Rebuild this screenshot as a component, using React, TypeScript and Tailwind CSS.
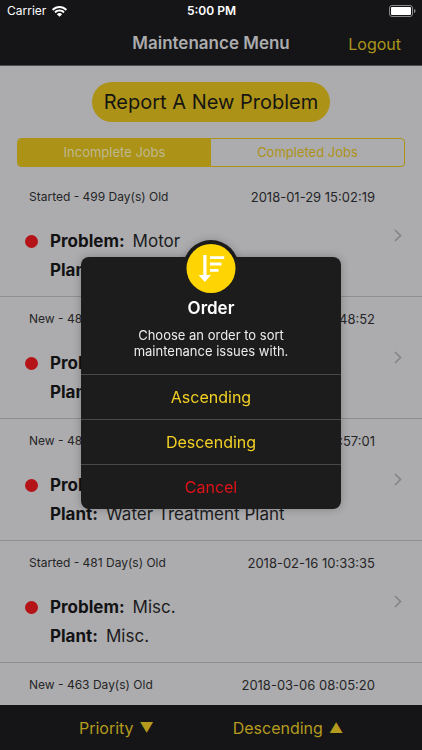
import React, { useState } from "react";

interface Job {
  id: number;
  status: string;
  age: number;
  date: string;
  problem: string;
  plant: string;
}

const jobs: Job[] = [
  { id: 1, status: "Started", age: 499, date: "2018-01-29 15:02:19", problem: "Motor", plant: "Misc." },
  { id: 2, status: "New", age: 488, date: "2018-02-09 13:48:52", problem: "Misc.", plant: "Misc." },
  { id: 3, status: "New", age: 484, date: "2018-02-13 10:57:01", problem: "Pump", plant: "Water Treatment Plant" },
  { id: 4, status: "Started", age: 481, date: "2018-02-16 10:33:35", problem: "Misc.", plant: "Misc." },
  { id: 5, status: "New", age: 463, date: "2018-03-06 08:05:20", problem: "Misc.", plant: "Misc." },
];

const WifiIcon: React.FC = () => (
  <svg viewBox="0 0 15 11" className="w-[15px] h-[11px]" fill="#fff" aria-hidden="true">
    <path d="M7.5 0C4.7 0 2.1 1.1.2 2.9c-.2.2-.2.4 0 .6l.9.9c.1.1.4.1.5 0C3.2 2.9 5.2 2 7.5 2s4.3.9 5.9 2.4c.1.1.4.1.5 0l.9-.9c.2-.2.2-.4 0-.6C12.9 1.1 10.3 0 7.5 0z" />
    <path d="M7.5 3.500c-1.900 0-3.600.7-4.900 1.900-.2.2-.2.4 0 .6l.9.9c.1.1.4.1.5 0 .9-.9 2.200-1.400 3.500-1.400s2.600.5 3.500 1.400c.1.1.4.1.5 0l.9-.9c.2-.2.2-.4 0-.6-1.300-1.200-3-1.900-4.900-1.900z" />
    <path d="M7.500 7c-.9 0-1.800.3-2.400.9-.2.2-.2.4 0 .6l2.100 2.100c.2.2.4.2.6 0l2.100-2.100c.2-.2.2-.4 0-.6C9.300 7.300 8.400 7 7.500 7z" />
  </svg>
);

const BatteryIcon: React.FC = () => (
  <svg viewBox="0 0 27 12" className="w-[27px] h-3" aria-hidden="true">
    <rect x="0.5" y="0.5" width="23" height="11" rx="2.5" fill="none" stroke="#8a8a8c" />
    <rect x="2" y="2" width="20" height="8" rx="1" fill="#fff" />
    <path d="M25 4c1 .3 1.500 1 1.500 2S26 7.700 25 8z" fill="#8a8a8c" />
  </svg>
);

const ChevronIcon: React.FC = () => (
  <svg viewBox="0 0 8 13" className="w-2 h-[13px]" fill="none" stroke="#858587" strokeWidth="1.7" aria-hidden="true">
    <path d="M1 1l5.500 5.500L1 12" />
  </svg>
);

const SortIcon: React.FC = () => (
  <svg viewBox="0 0 26 27" className="w-[26px] h-[27px]" fill="#fff" aria-hidden="true">
    <path d="M4.800 0H8v20h4.500l-6.200 7L0 20h4.800z" />
    <path d="M11.500 1.200H26V4H11.500zM11.500 7.600H23v2.800H11.500zM11.500 14H20v2.800h-8.500z" />
  </svg>
);

const JobRow: React.FC<{ job: Job }> = ({ job }) => (
  <li className="relative h-[122px] shrink-0 border-b border-[#8f8f91]">
    <a href={`#job-${job.id}`} className="flex h-full flex-col pl-[25px] pr-[47px] pt-3.5">
      <div className="flex justify-between pl-1 leading-4 text-[#252527]">
        <span className="text-xs leading-4">
          {job.status} - {job.age} Day(s) Old
        </span>
        <span className="text-[13px]">{job.date}</span>
      </div>
      <div className="mt-[22px] flex gap-3">
        <span className="mt-2 h-[13px] w-[13px] rounded-full bg-[#b41318]" />
        <div className="text-[17px] leading-[29px] text-[#1b1b1d]">
          <p>
            <b className="mr-2 font-bold text-[#121214]">Problem:</b>
            {job.problem}
          </p>
          <p>
            <b className="mr-2 font-bold text-[#121214]">Plant:</b>
            {job.plant}
          </p>
        </div>
      </div>
    </a>
    <span className="absolute inset-y-0 right-5 flex items-center">
      <ChevronIcon />
    </span>
  </li>
);

const OrderDialog: React.FC<{ onSelect: () => void }> = ({ onSelect }) => (
  <div className="fixed inset-0 flex items-center justify-center">
    <div role="dialog" aria-labelledby="order-title" className="relative w-[260px] pt-4">
      <div className="absolute left-1/2 -top-px h-14 w-14 -translate-x-1/2 rounded-full bg-[#1c1c1c] shadow-[0_0_8px_rgba(0,0,0,0.2)]" />
      <div className="relative rounded-lg bg-[#1c1c1c] shadow-[0_0_8px_rgba(0,0,0,0.25)]">
        <div className="flex h-[117px] flex-col items-center pt-10 text-center text-white">
          <h2 id="order-title" className="text-[17px] font-semibold leading-[22px]">
            Order
          </h2>
          <p className="mt-2 w-44 text-[13px] leading-4 text-[#ececec]">
            Choose an order to sort maintenance issues with.
          </p>
        </div>
        <button onClick={onSelect} className="h-[45px] w-full border-t border-[#484848] text-base text-[#f2d024]">
          Ascending
        </button>
        <button onClick={onSelect} className="h-[45px] w-full border-t border-[#484848] text-base text-[#f2d024]">
          Descending
        </button>
        <button onClick={onSelect} className="h-[45px] w-full border-t border-[#484848] text-base text-[#e01218]">
          Cancel
        </button>
      </div>
      <div className="absolute left-1/2 top-[3px] flex h-[49px] w-[49px] -translate-x-1/2 items-center justify-center rounded-full bg-[#fed402]">
        <SortIcon />
      </div>
    </div>
  </div>
);

const App: React.FC = () => {
  const [dialogOpen, setDialogOpen] = useState(true);

  return (
    <div className="flex h-screen flex-col overflow-hidden bg-[#acacae] font-['Inter',sans-serif]">
      {/* Header */}
      <header className="shrink-0 border-b border-[#4c4c4e] bg-[#151517]">
        <div className="grid h-[22px] grid-cols-3 items-center pl-[7px] pr-1.5 text-xs text-white">
          <div className="flex items-center gap-1.5">
            Carrier
            <WifiIcon />
          </div>
          <span className="text-center font-semibold">5:00 PM</span>
          <div className="flex justify-end">
            <BatteryIcon />
          </div>
        </div>
        <div className="grid h-[43px] grid-cols-[1fr_auto_1fr] items-center px-[21px] text-base">
          <h1 className="col-start-2 text-[17px] font-semibold text-[#acacae]">Maintenance Menu</h1>
          <a href="#logout" className="justify-self-end text-[#ab951c]">
            Logout
          </a>
        </div>
      </header>

      {/* Jobs */}
      <main className="flex min-h-0 flex-1 flex-col overflow-hidden">
        <button className="mt-4 h-10 shrink-0 self-center rounded-full bg-[#ac9217] px-3 text-xl text-[#151512]">
          Report A New Problem
        </button>
        <div className="mx-[17px] mt-4 flex h-[29px] shrink-0 overflow-hidden rounded border border-[#ac9217] text-[13px]">
          <button className="flex-1 bg-[#ac9217] text-[#bdb98f]">Incomplete Jobs</button>
          <button className="flex-1 text-[#ac9217]">Completed Jobs</button>
        </div>
        <ul className="mt-2 flex flex-col">
          {jobs.map((job) => (
            <JobRow key={job.id} job={job} />
          ))}
        </ul>
      </main>

      {/* Sort bar */}
      <footer className="flex h-[45px] shrink-0 items-center justify-evenly bg-[#151517] text-base text-[#b49b1e]">
        <button className="flex items-center gap-1.5">
          Priority <span className="text-sm">▼</span>
        </button>
        <button onClick={() => setDialogOpen(true)} className="flex items-center gap-1.5">
          Descending <span className="text-sm">▲</span>
        </button>
      </footer>

      {dialogOpen && <OrderDialog onSelect={() => setDialogOpen(false)} />}
    </div>
  );
};

export default App;
